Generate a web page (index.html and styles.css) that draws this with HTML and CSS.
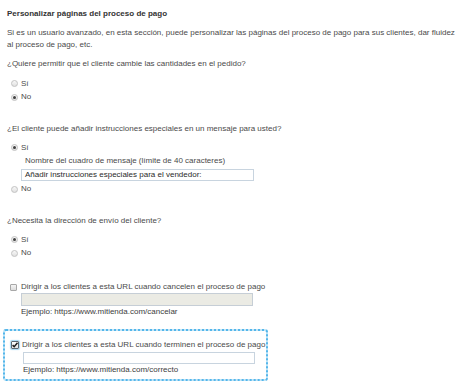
FILE: index.html
```html
<!DOCTYPE html>
<html lang="es">
<head>
<meta charset="utf-8">
<title>Personalizar páginas del proceso de pago</title>
<link rel="stylesheet" href="styles.css">
</head>
<body>
<div class="page">
  <h1 class="title">Personalizar páginas del proceso de pago</h1>
  <p class="intro">Si es un usuario avanzado, en esta sección, puede personalizar las páginas del proceso de pago para sus clientes, dar fluidez<br>al proceso de pago, etc.</p>

  <section class="group g1">
    <div class="question">¿Quiere permitir que el cliente cambie las cantidades en el pedido?</div>
    <div class="options">
      <div class="opt"><span class="radio"></span>Sí</div>
      <div class="opt"><span class="radio checked"></span>No</div>
    </div>
  </section>

  <section class="group g2">
    <div class="question">¿El cliente puede añadir instrucciones especiales en un mensaje para usted?</div>
    <div class="options">
      <div class="opt"><span class="radio checked"></span>Sí</div>
      <div class="sub">
        <div class="sublabel">Nombre del cuadro de mensaje (límite de 40 caracteres)</div>
        <div class="field msg">Añadir instrucciones especiales para el vendedor:</div>
      </div>
      <div class="opt opt-after"><span class="radio"></span>No</div>
    </div>
  </section>

  <section class="group g3">
    <div class="question">¿Necesita la dirección de envío del cliente?</div>
    <div class="options">
      <div class="opt"><span class="radio checked"></span>Sí</div>
      <div class="opt"><span class="radio"></span>No</div>
    </div>
  </section>

  <section class="url-block cancel">
    <div class="check-row"><span class="checkbox"></span>Dirigir a los clientes a esta URL cuando cancelen el proceso de pago</div>
    <div class="field disabled"></div>
    <div class="example">Ejemplo: https://www.mitienda.com/cancelar</div>
  </section>

  <section class="url-block done">
    <div class="check-row"><span class="checkbox checked"><svg width="8" height="8" viewBox="0 0 8 8"><path d="M1.6 4.1 L3.2 5.7 L6.5 1.7" fill="none" stroke="#1d1d1d" stroke-width="1.5"/></svg></span>Dirigir a los clientes a esta URL cuando terminen el proceso de pago</div>
    <div class="field url"></div>
    <div class="example">Ejemplo: https://www.mitienda.com/correcto</div>
  </section>
</div>
</body>
</html>
```

FILE: styles.css
```css
* { box-sizing: border-box; }

html, body {
  margin: 0;
  padding: 0;
  background: #ffffff;
}

body {
  font-family: "Liberation Sans", Arial, sans-serif;
  font-size: 8px;
  color: #4a4a4a;
}

.page {
  padding: 8px 0 0 7px;
}

.title {
  margin: 0;
  font-size: 8px;
  line-height: 12px;
  font-weight: bold;
  color: #333333;
}

.intro {
  margin: 7px 0 0;
  line-height: 11.5px;
  white-space: nowrap;
}

.question {
  line-height: 12px;
  white-space: nowrap;
}

.g1 { margin-top: 8px; }
.g1 .options { margin-top: 7px; }

.g2 { margin-top: 19px; }
.g2 .options { margin-top: 6px; }

.g3 { margin-top: 19px; }
.g3 .options { margin-top: 6px; }

.opt {
  display: flex;
  align-items: center;
  height: 13.5px;
  line-height: 12px;
}

.radio {
  width: 7px;
  height: 7px;
  margin-left: 4px;
  margin-right: 3px;
  border-radius: 50%;
  border: 1px solid #c2c2c2;
  background: linear-gradient(#f8f8f8, #e0e0e0);
  display: flex;
  align-items: center;
  justify-content: center;
  flex: none;
}

.radio.checked::after {
  content: "";
  width: 3px;
  height: 3px;
  border-radius: 50%;
  background: #404040;
}

.sub {
  padding-left: 14px;
}

.sublabel {
  line-height: 12px;
  padding-left: 4px;
}

.field {
  height: 12px;
  border: 1px solid #c8d4df;
  background: #ffffff;
}

.field.msg {
  margin-top: 2px;
  width: 233px;
  padding-left: 3px;
  line-height: 10px;
  color: #2a2a2a;
  white-space: nowrap;
}

.opt-after { margin-top: 2px; }

.url-block .field {
  margin-left: 14px;
  width: 232px;
}

.cancel {
  margin-top: 21px;
}

.check-row {
  display: flex;
  align-items: center;
  height: 12px;
  line-height: 12px;
  white-space: nowrap;
  padding-left: 3px;
}

.checkbox {
  width: 7px;
  height: 7px;
  margin-right: 4px;
  border: 1px solid #a8a8a8;
  border-radius: 1px;
  background: linear-gradient(#f5f5f5, #dcdcdc);
  flex: none;
  display: flex;
  align-items: center;
  justify-content: center;
}

.checkbox.checked {
  width: 8px;
  height: 8px;
  margin-left: -1px;
  margin-right: 3px;
  border-color: #5b6670;
  background: linear-gradient(#ffffff, #e4e4e4);
  box-shadow: 0 0 1px 1px #a6d8f3;
}

.checkbox.checked svg {
  display: block;
  margin: -1px;
}

.field.disabled {
  height: 13px;
  background: #ebebe4;
  border-color: #c6ced6;
}

.example {
  line-height: 12px;
  padding-left: 14px;
  color: #3d3d3d;
  white-space: nowrap;
}

.done {
  margin-top: 11px;
  margin-left: -4px;
  width: 265px;
  padding: 8px 0 3px 4px;
  border: 2px dotted #55b6ea;
  border-radius: 3px;
  background: linear-gradient(#ffffff, #ffffff) padding-box, #c2e6f8 border-box;
}

.done .check-row { padding-left: 3px; }
.done .field.url { margin-top: 1px; margin-left: 14px; }
.done .example { padding-left: 14px; }
```
